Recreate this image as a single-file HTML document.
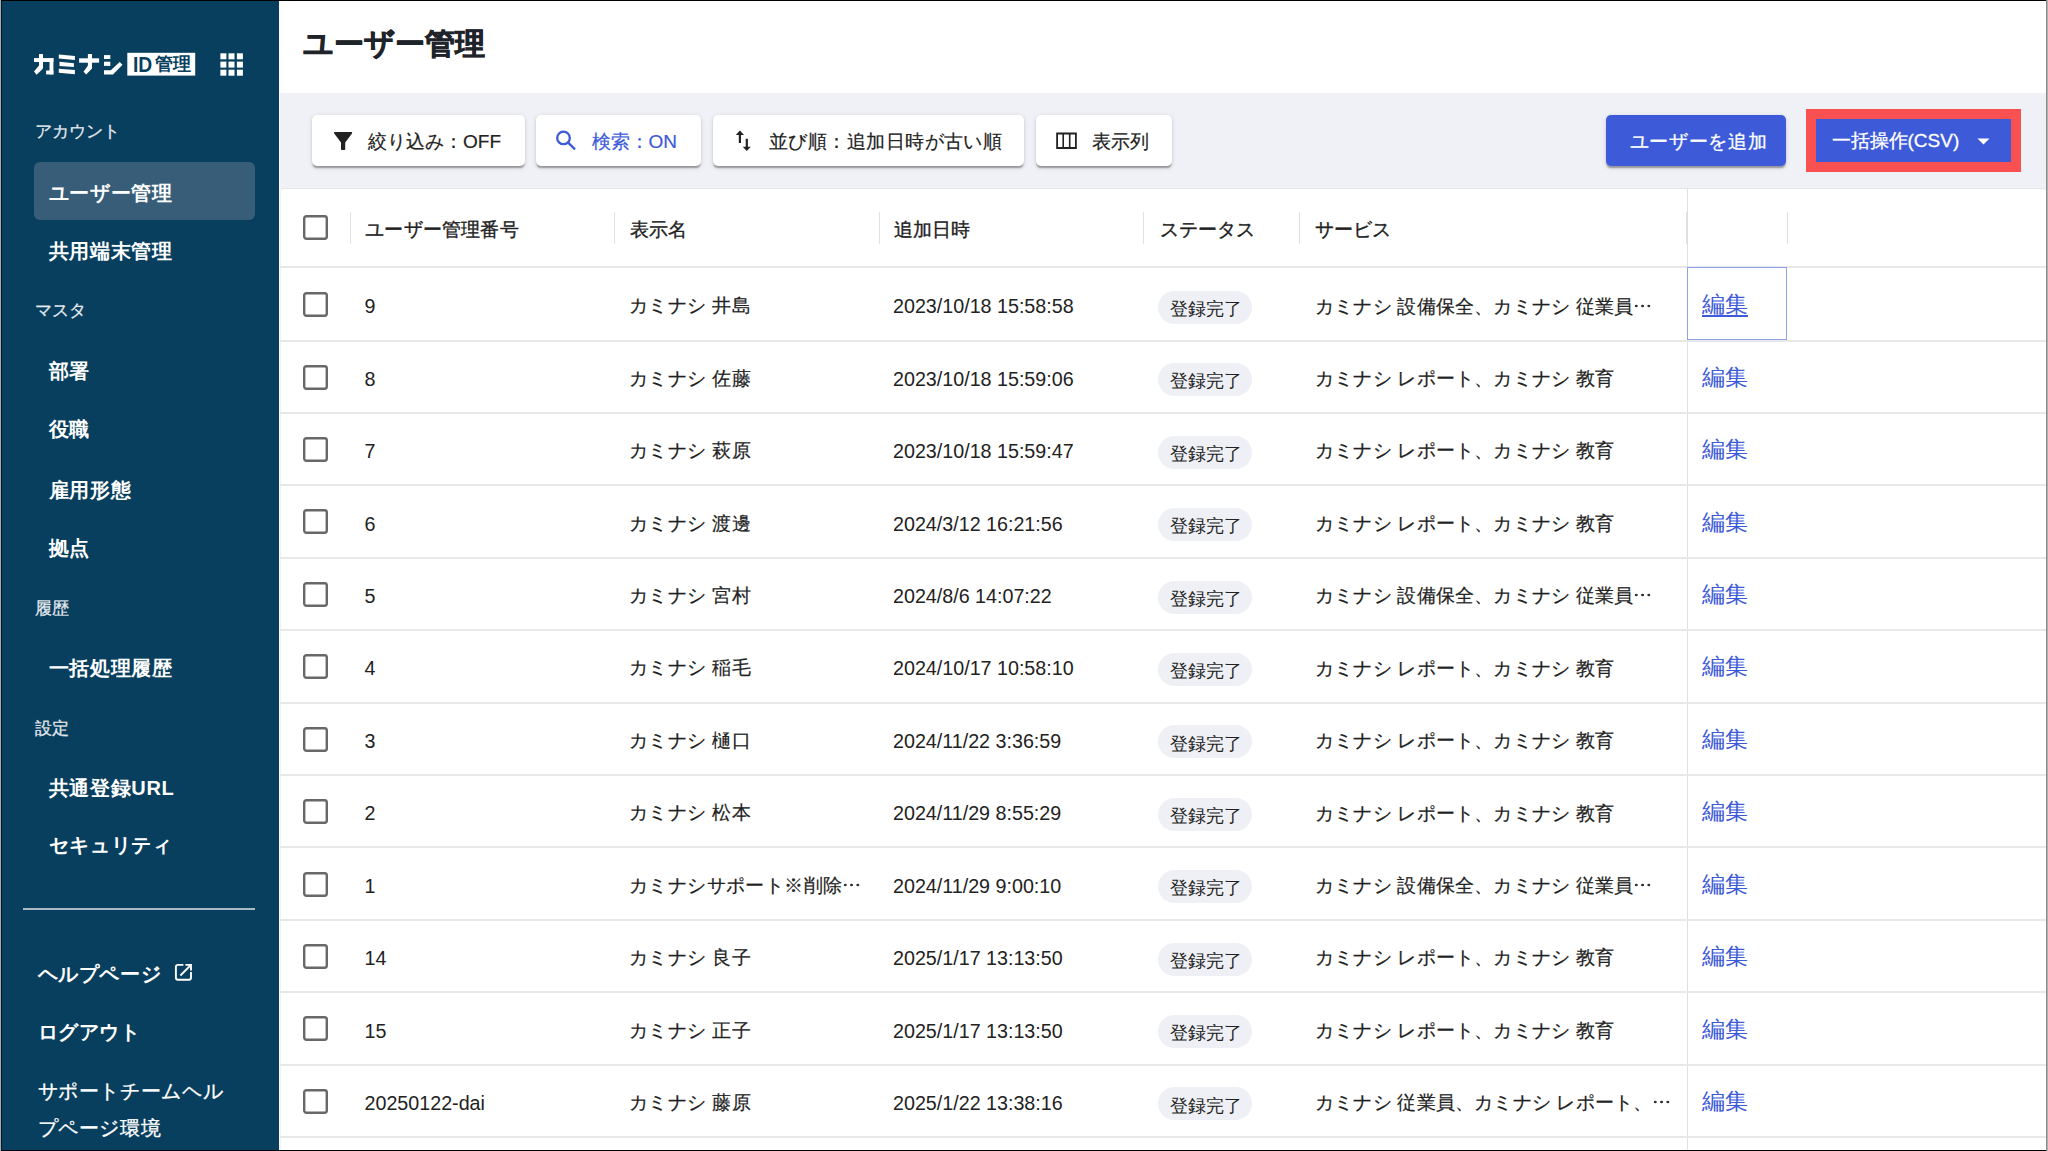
<!DOCTYPE html><html lang="ja"><head><meta charset="utf-8"><title>ユーザー管理</title><style>
*{box-sizing:border-box;margin:0;padding:0}
html,body{width:2048px;height:1151px;overflow:hidden;background:#fff;font-family:"Liberation Sans",sans-serif;color:#222222}
.a{position:absolute;white-space:nowrap}
#side{position:absolute;left:0;top:0;width:279px;height:1151px;background:#093f5e}
.sl{position:absolute;color:#e6ebef;font-size:17px;line-height:20px;-webkit-text-stroke:.25px #e6ebef}
.si{position:absolute;color:#fff;font-size:20px;font-weight:bold;line-height:28px;letter-spacing:.7px}
.sb{position:absolute;color:#fff;font-size:20px;font-weight:bold;line-height:26px;letter-spacing:.65px}
.btn{position:absolute;top:115px;height:51px;background:#fff;border-radius:5px;box-shadow:0 3px 1.6px -1.6px rgba(0,0,0,.2),0 1.6px 1.6px 0 rgba(0,0,0,.14),0 1.6px 4.8px 0 rgba(0,0,0,.12)}
.bt{position:absolute;font-size:19px;line-height:24px;top:14.5px;color:#222;-webkit-text-stroke:.2px currentColor}
.hd{position:absolute;top:217.5px;font-size:19.2px;line-height:24px;letter-spacing:.2px;color:#222;-webkit-text-stroke:.35px #222}
.sep{position:absolute;top:211.5px;height:32.5px;width:1px;background:#e0e0e0}
.hl{position:absolute;left:280px;width:1766px;height:2px;background:#e8e8e8}
.cb{position:absolute;left:302.8px;width:25px;height:25px}
.td{position:absolute;font-size:19.7px;line-height:24px;color:#222}
.tj{-webkit-text-stroke:.2px #222}
.chip{position:absolute;left:1158px;width:94px;height:33px;border-radius:17px;background:#eef0f5}
.chip span{position:absolute;left:12px;top:6.3px;font-size:17.6px;line-height:24px;color:#222}
.el{display:inline-block;width:19px;height:4px;margin-left:1px;vertical-align:5px;background:radial-gradient(circle at 2.5px 2px,#333 1.3px,transparent 1.6px) 0 0/6.3px 4px repeat-x}
.ed{position:absolute;left:1702px;font-size:23px;line-height:28px;color:#3d5bd9}
</style></head><body>
<div id="side">
<svg class="a" style="left:0;top:0" width="279" height="90" viewBox="0 0 279 90">
<g fill="#fff">
<rect x="39" y="54" width="4" height="14"/>
<rect x="34" y="58.1" width="19.4" height="3.9"/>
<rect x="49.5" y="58.1" width="3.9" height="16.3"/>
<rect x="46.1" y="70.5" width="7.3" height="3.9"/>
<polygon points="39,65.5 43,68.5 36.7,74.7 34,71.6"/>
<polygon points="58.8,54.6 74.9,56.1 74.9,60 58.8,58.5"/>
<polygon points="59.5,61.7 73.9,63.2 73.9,67.1 59.5,65.9"/>
<polygon points="58.8,68.8 74.9,70 74.9,74.2 58.8,72.7"/>
<rect x="79.1" y="58.3" width="20" height="4.4"/>
<rect x="87.9" y="54" width="4.1" height="14.5"/>
<polygon points="88,65.5 92,68.6 86.2,74.6 83.5,71.8"/>
<rect x="104" y="55.1" width="6.3" height="3.9"/>
<rect x="104" y="61.7" width="6.3" height="4.2"/>
<polygon points="104,70.3 110.8,70.3 119.7,62 122.5,64.8 113,74.4 104,74.4"/>
<rect x="127.3" y="52.8" width="67.9" height="22.8"/>
<rect x="220.4" y="53.3" width="6" height="6"/><rect x="228.5" y="53.3" width="6" height="6"/><rect x="236.9" y="53.3" width="6" height="6"/>
<rect x="220.4" y="61.6" width="6" height="6"/><rect x="228.5" y="61.6" width="6" height="6"/><rect x="236.9" y="61.6" width="6" height="6"/>
<rect x="220.4" y="69.7" width="6" height="6"/><rect x="228.5" y="69.7" width="6" height="6"/><rect x="236.9" y="69.7" width="6" height="6"/>
</g></svg>
<div class="a" style="left:132.5px;top:50px;font-size:22.7px;line-height:28px;font-weight:bold;color:#093f5e;transform:scaleX(.85);transform-origin:0 0">ID</div>
<div class="a" style="left:155px;top:52px;font-size:17.5px;line-height:24px;font-weight:bold;color:#093f5e">管理</div>
<div class="a" style="left:34px;top:162px;width:221px;height:58px;border-radius:6px;background:#385d78"></div>
<div class="sl" style="left:35px;top:121.8px">アカウント</div>
<div class="sl" style="left:35px;top:300.9px">マスタ</div>
<div class="sl" style="left:35px;top:599.0px">履歴</div>
<div class="sl" style="left:35px;top:718.7px">設定</div>
<div class="si" style="left:48.5px;top:178.7px">ユーザー管理</div>
<div class="si" style="left:48.5px;top:237.0px">共用端末管理</div>
<div class="si" style="left:48.5px;top:357.3px">部署</div>
<div class="si" style="left:48.5px;top:415.2px">役職</div>
<div class="si" style="left:48.5px;top:475.5px">雇用形態</div>
<div class="si" style="left:48.5px;top:533.5px">拠点</div>
<div class="si" style="left:48.5px;top:653.5px">一括処理履歴</div>
<div class="si" style="left:48.5px;top:774.3px">共通登録URL</div>
<div class="si" style="left:48.5px;top:831.0px">セキュリティ</div>
<div class="a" style="left:23px;top:908px;width:232px;height:1.5px;background:#a9bac6"></div>
<div class="sb" style="left:37.5px;top:960.8px;font-weight:bold">ヘルプページ</div>
<div class="sb" style="left:37.5px;top:1018.8px;font-weight:bold">ログアウト</div>
<div class="sb" style="left:37.5px;top:1077.7px;font-weight:normal;-webkit-text-stroke:.3px #fff">サポートチームヘル</div>
<div class="sb" style="left:37.5px;top:1114.5px;font-weight:normal;-webkit-text-stroke:.3px #fff">プページ環境</div>
<svg class="a" style="left:170px;top:960px" width="26" height="26" viewBox="170 960 26 26"><g fill="none" stroke="#fff" stroke-width="1.9"><path d="M183.4 964.9H178Q175.9 964.9 175.9 967V977.7Q175.9 979.8 178 979.8H188.9Q191 979.8 191 977.7V972.1"/><path d="M185.4 964.9H191V970.6M191 964.9L180.4 975.5"/></g></svg>
</div>
<div class="a" style="left:303px;top:24px;font-size:30px;line-height:40px;font-weight:bold;color:#1f242b;-webkit-text-stroke:.7px #1f242b">ユーザー管理</div>
<div class="a" style="left:280px;top:93px;width:1766px;height:96px;background:#f0f1f6"></div>
<div class="btn" style="left:312px;width:213px"><svg class="a" style="left:0;top:0" width="213" height="51" viewBox="312 115 213 51"><path fill="#222" d="M334.6 132 H351.6 Q352.6 132.2 352 133.6 L345.2 142.4 V149.2 Q345.2 150 344.4 150 H341.8 Q341 150 341 149.2 V142.4 L334.2 133.6 Q333.6 132.2 334.6 132Z"/></svg><span class="bt" style="left:56px">絞り込み：OFF</span></div>
<div class="btn" style="left:536px;width:165px"><svg class="a" style="left:0;top:0" width="165" height="51" viewBox="536 115 165 51"><g fill="none" stroke="#3d5bd9" stroke-width="2.3"><circle cx="563.5" cy="137.9" r="6.3"/><path d="M568.2 142.6 L575 149.4"/></g></svg><span class="bt" style="left:55.5px;color:#3d5bd9">検索：ON</span></div>
<div class="btn" style="left:713px;width:311px"><svg class="a" style="left:0;top:0" width="311" height="51" viewBox="713 115 311 51"><g fill="#222"><path d="M739.9 130.6 L744 134.9 H741 V142.9 H738.8 V134.9 H735.8Z"/><path d="M746.8 151 L750.8 146.8 H747.9 V138.8 H745.7 V146.8 H742.7Z"/></g></svg><span class="bt" style="left:56px;letter-spacing:.45px">並び順：追加日時が古い順</span></div>
<div class="btn" style="left:1036px;width:136px"><svg class="a" style="left:0;top:0" width="136" height="51" viewBox="1036 115 136 51"><path fill="#222" fill-rule="evenodd" d="M1056.2 132.6 H1076.8 V148.9 H1056.2Z M1058 134.4 V147.1 H1062.4 V134.4Z M1064 134.4 V147.1 H1068.9 V134.4Z M1070.5 134.4 V147.1 H1075 V134.4Z"/></svg><span class="bt" style="left:56px">表示列</span></div>
<div class="a" style="left:1606px;top:115px;width:180px;height:51px;border-radius:5px;background:#3d5bd9;box-shadow:0 3px 1.6px -1.6px rgba(0,0,0,.2),0 1.6px 1.6px 0 rgba(0,0,0,.14),0 1.6px 4.8px 0 rgba(0,0,0,.12)"><span class="bt" style="left:23.5px;top:15px;font-size:19px;letter-spacing:.7px;color:#fff;-webkit-text-stroke:.3px #fff">ユーザーを追加</span></div>
<div class="a" style="left:1806px;top:109px;width:215px;height:63px;background:#f95151"></div>
<div class="a" style="left:1816px;top:119px;width:195px;height:43px;background:#3d5bd9"><span class="bt" style="left:15.5px;top:9.5px;color:#fff;-webkit-text-stroke:.3px #fff">一括操作(CSV)</span><svg class="a" style="left:0;top:0" width="195" height="43" viewBox="1816 119 195 43"><path fill="#fff" d="M1977.5 138.5 H1989.5 L1983.5 144.5Z"/></svg></div>
<div class="a" style="left:280px;top:188px;width:1766px;height:963px;background:#fff;border-radius:4px 4px 0 0;border-top:1px solid #e6e6e8;border-left:1px solid #f3f0ef"></div>
<svg class="cb" style="top:215.4px" width="25" height="25" viewBox="0 0 25 25"><rect x="1.2" y="1.2" width="22.6" height="22.6" rx="2.2" fill="none" stroke="#686868" stroke-width="2.4"/></svg>
<div class="sep" style="left:349.5px"></div>
<div class="sep" style="left:614.0px"></div>
<div class="sep" style="left:878.5px"></div>
<div class="sep" style="left:1143.1px"></div>
<div class="sep" style="left:1299.2px"></div>
<div class="sep" style="left:1685.9px"></div>
<div class="sep" style="left:1786.5px"></div>
<div class="hd" style="left:365.2px">ユーザー管理番号</div>
<div class="hd" style="left:629.5px">表示名</div>
<div class="hd" style="left:893.9px">追加日時</div>
<div class="hd" style="left:1159.7px">ステータス</div>
<div class="hd" style="left:1314.6px">サービス</div>
<div class="hl" style="top:266px"></div>
<div class="a" style="left:1687px;top:189px;width:1px;height:962px;background:#e0e0e0"></div>
<div class="hl" style="top:339.5px"></div>
<svg class="cb" style="top:292.1px" width="25" height="25" viewBox="0 0 25 25"><rect x="1.2" y="1.2" width="22.6" height="22.6" rx="2.2" fill="none" stroke="#686868" stroke-width="2.4"/></svg>
<div class="td" style="left:364.5px;top:294.3px">9</div>
<div class="td tj" style="left:629px;top:294.3px;font-size:19px;letter-spacing:.4px">カミナシ 井島</div>
<div class="td" style="left:893px;top:294.3px">2023/10/18 15:58:58</div>
<div class="chip" style="top:290.8px"><span>登録完了</span></div>
<div class="td tj" style="left:1315px;top:294.6px;font-size:19.2px;letter-spacing:.2px">カミナシ 設備保全、カミナシ 従業員<i class=el></i></div>
<div class="ed" style="top:290.3px;text-decoration:underline;text-underline-offset:3px">編集</div>
<div class="hl" style="top:411.9px"></div>
<svg class="cb" style="top:364.5px" width="25" height="25" viewBox="0 0 25 25"><rect x="1.2" y="1.2" width="22.6" height="22.6" rx="2.2" fill="none" stroke="#686868" stroke-width="2.4"/></svg>
<div class="td" style="left:364.5px;top:366.7px">8</div>
<div class="td tj" style="left:629px;top:366.7px;font-size:19px;letter-spacing:.4px">カミナシ 佐藤</div>
<div class="td" style="left:893px;top:366.7px">2023/10/18 15:59:06</div>
<div class="chip" style="top:363.2px"><span>登録完了</span></div>
<div class="td tj" style="left:1315px;top:367.0px;font-size:19.2px;letter-spacing:.2px">カミナシ レポート、カミナシ 教育</div>
<div class="ed" style="top:362.7px;">編集</div>
<div class="hl" style="top:484.3px"></div>
<svg class="cb" style="top:436.9px" width="25" height="25" viewBox="0 0 25 25"><rect x="1.2" y="1.2" width="22.6" height="22.6" rx="2.2" fill="none" stroke="#686868" stroke-width="2.4"/></svg>
<div class="td" style="left:364.5px;top:439.1px">7</div>
<div class="td tj" style="left:629px;top:439.1px;font-size:19px;letter-spacing:.4px">カミナシ 萩原</div>
<div class="td" style="left:893px;top:439.1px">2023/10/18 15:59:47</div>
<div class="chip" style="top:435.6px"><span>登録完了</span></div>
<div class="td tj" style="left:1315px;top:439.4px;font-size:19.2px;letter-spacing:.2px">カミナシ レポート、カミナシ 教育</div>
<div class="ed" style="top:435.1px;">編集</div>
<div class="hl" style="top:556.8px"></div>
<svg class="cb" style="top:509.4px" width="25" height="25" viewBox="0 0 25 25"><rect x="1.2" y="1.2" width="22.6" height="22.6" rx="2.2" fill="none" stroke="#686868" stroke-width="2.4"/></svg>
<div class="td" style="left:364.5px;top:511.6px">6</div>
<div class="td tj" style="left:629px;top:511.6px;font-size:19px;letter-spacing:.4px">カミナシ 渡邊</div>
<div class="td" style="left:893px;top:511.6px">2024/3/12 16:21:56</div>
<div class="chip" style="top:508.1px"><span>登録完了</span></div>
<div class="td tj" style="left:1315px;top:511.9px;font-size:19.2px;letter-spacing:.2px">カミナシ レポート、カミナシ 教育</div>
<div class="ed" style="top:507.6px;">編集</div>
<div class="hl" style="top:629.2px"></div>
<svg class="cb" style="top:581.8px" width="25" height="25" viewBox="0 0 25 25"><rect x="1.2" y="1.2" width="22.6" height="22.6" rx="2.2" fill="none" stroke="#686868" stroke-width="2.4"/></svg>
<div class="td" style="left:364.5px;top:584.0px">5</div>
<div class="td tj" style="left:629px;top:584.0px;font-size:19px;letter-spacing:.4px">カミナシ 宮村</div>
<div class="td" style="left:893px;top:584.0px">2024/8/6 14:07:22</div>
<div class="chip" style="top:580.5px"><span>登録完了</span></div>
<div class="td tj" style="left:1315px;top:584.3px;font-size:19.2px;letter-spacing:.2px">カミナシ 設備保全、カミナシ 従業員<i class=el></i></div>
<div class="ed" style="top:580.0px;">編集</div>
<div class="hl" style="top:701.6px"></div>
<svg class="cb" style="top:654.2px" width="25" height="25" viewBox="0 0 25 25"><rect x="1.2" y="1.2" width="22.6" height="22.6" rx="2.2" fill="none" stroke="#686868" stroke-width="2.4"/></svg>
<div class="td" style="left:364.5px;top:656.4px">4</div>
<div class="td tj" style="left:629px;top:656.4px;font-size:19px;letter-spacing:.4px">カミナシ 稲毛</div>
<div class="td" style="left:893px;top:656.4px">2024/10/17 10:58:10</div>
<div class="chip" style="top:652.9px"><span>登録完了</span></div>
<div class="td tj" style="left:1315px;top:656.7px;font-size:19.2px;letter-spacing:.2px">カミナシ レポート、カミナシ 教育</div>
<div class="ed" style="top:652.4px;">編集</div>
<div class="hl" style="top:774.0px"></div>
<svg class="cb" style="top:726.6px" width="25" height="25" viewBox="0 0 25 25"><rect x="1.2" y="1.2" width="22.6" height="22.6" rx="2.2" fill="none" stroke="#686868" stroke-width="2.4"/></svg>
<div class="td" style="left:364.5px;top:728.8px">3</div>
<div class="td tj" style="left:629px;top:728.8px;font-size:19px;letter-spacing:.4px">カミナシ 樋口</div>
<div class="td" style="left:893px;top:728.8px">2024/11/22 3:36:59</div>
<div class="chip" style="top:725.3px"><span>登録完了</span></div>
<div class="td tj" style="left:1315px;top:729.1px;font-size:19.2px;letter-spacing:.2px">カミナシ レポート、カミナシ 教育</div>
<div class="ed" style="top:724.8px;">編集</div>
<div class="hl" style="top:846.4px"></div>
<svg class="cb" style="top:799.0px" width="25" height="25" viewBox="0 0 25 25"><rect x="1.2" y="1.2" width="22.6" height="22.6" rx="2.2" fill="none" stroke="#686868" stroke-width="2.4"/></svg>
<div class="td" style="left:364.5px;top:801.2px">2</div>
<div class="td tj" style="left:629px;top:801.2px;font-size:19px;letter-spacing:.4px">カミナシ 松本</div>
<div class="td" style="left:893px;top:801.2px">2024/11/29 8:55:29</div>
<div class="chip" style="top:797.7px"><span>登録完了</span></div>
<div class="td tj" style="left:1315px;top:801.5px;font-size:19.2px;letter-spacing:.2px">カミナシ レポート、カミナシ 教育</div>
<div class="ed" style="top:797.2px;">編集</div>
<div class="hl" style="top:918.9px"></div>
<svg class="cb" style="top:871.5px" width="25" height="25" viewBox="0 0 25 25"><rect x="1.2" y="1.2" width="22.6" height="22.6" rx="2.2" fill="none" stroke="#686868" stroke-width="2.4"/></svg>
<div class="td" style="left:364.5px;top:873.7px">1</div>
<div class="td tj" style="left:629px;top:873.7px;font-size:19px;letter-spacing:.4px">カミナシサポート※削除<i class=el></i></div>
<div class="td" style="left:893px;top:873.7px">2024/11/29 9:00:10</div>
<div class="chip" style="top:870.2px"><span>登録完了</span></div>
<div class="td tj" style="left:1315px;top:874.0px;font-size:19.2px;letter-spacing:.2px">カミナシ 設備保全、カミナシ 従業員<i class=el></i></div>
<div class="ed" style="top:869.7px;">編集</div>
<div class="hl" style="top:991.3px"></div>
<svg class="cb" style="top:943.9px" width="25" height="25" viewBox="0 0 25 25"><rect x="1.2" y="1.2" width="22.6" height="22.6" rx="2.2" fill="none" stroke="#686868" stroke-width="2.4"/></svg>
<div class="td" style="left:364.5px;top:946.1px">14</div>
<div class="td tj" style="left:629px;top:946.1px;font-size:19px;letter-spacing:.4px">カミナシ 良子</div>
<div class="td" style="left:893px;top:946.1px">2025/1/17 13:13:50</div>
<div class="chip" style="top:942.6px"><span>登録完了</span></div>
<div class="td tj" style="left:1315px;top:946.4px;font-size:19.2px;letter-spacing:.2px">カミナシ レポート、カミナシ 教育</div>
<div class="ed" style="top:942.1px;">編集</div>
<div class="hl" style="top:1063.7px"></div>
<svg class="cb" style="top:1016.3px" width="25" height="25" viewBox="0 0 25 25"><rect x="1.2" y="1.2" width="22.6" height="22.6" rx="2.2" fill="none" stroke="#686868" stroke-width="2.4"/></svg>
<div class="td" style="left:364.5px;top:1018.5px">15</div>
<div class="td tj" style="left:629px;top:1018.5px;font-size:19px;letter-spacing:.4px">カミナシ 正子</div>
<div class="td" style="left:893px;top:1018.5px">2025/1/17 13:13:50</div>
<div class="chip" style="top:1015.0px"><span>登録完了</span></div>
<div class="td tj" style="left:1315px;top:1018.8px;font-size:19.2px;letter-spacing:.2px">カミナシ レポート、カミナシ 教育</div>
<div class="ed" style="top:1014.5px;">編集</div>
<div class="hl" style="top:1136.1px"></div>
<svg class="cb" style="top:1088.7px" width="25" height="25" viewBox="0 0 25 25"><rect x="1.2" y="1.2" width="22.6" height="22.6" rx="2.2" fill="none" stroke="#686868" stroke-width="2.4"/></svg>
<div class="td" style="left:364.5px;top:1090.9px">20250122-dai</div>
<div class="td tj" style="left:629px;top:1090.9px;font-size:19px;letter-spacing:.4px">カミナシ 藤原</div>
<div class="td" style="left:893px;top:1090.9px">2025/1/22 13:38:16</div>
<div class="chip" style="top:1087.4px"><span>登録完了</span></div>
<div class="td tj" style="left:1315px;top:1091.2px;font-size:19.2px;letter-spacing:.2px">カミナシ 従業員、カミナシ レポート、<i class=el></i></div>
<div class="ed" style="top:1086.9px;">編集</div>
<div class="a" style="left:1687px;top:267px;width:100px;height:73px;border:1.5px solid #8fa3ea"></div>
<div class="a" style="left:0;top:0;width:2048px;height:1px;background:#000"></div>
<div class="a" style="left:0;top:1150px;width:2048px;height:1px;background:#000"></div>
<div class="a" style="left:0;top:0;width:1px;height:1151px;background:#aaa"></div>
<div class="a" style="left:1px;top:0;width:1px;height:1151px;background:#001a2a"></div>
<div class="a" style="left:2046px;top:0;width:1px;height:1151px;background:#8a8a8a"></div>
<div class="a" style="left:2047px;top:0;width:1px;height:1151px;background:#b0b0b0"></div>
</body></html>
